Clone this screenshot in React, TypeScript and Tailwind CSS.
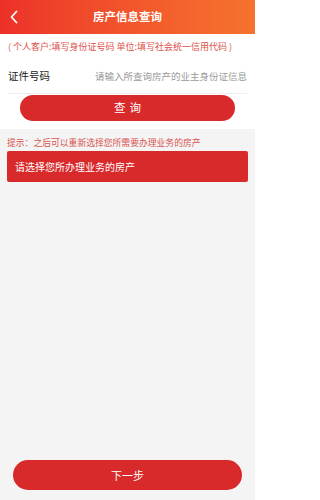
import React from "react";

export default function App() {
  const font = { fontFamily: '"Noto Sans CJK SC", "Noto Sans", sans-serif' };
  return (
    <div style={font} className="w-[255px] h-[500px] flex flex-col bg-[#f4f4f4]">
      <div className="h-[34px] shrink-0 relative flex items-center justify-center bg-gradient-to-r from-[#ec3029] to-[#f6722e]">
        <svg className="absolute left-[9px] top-[10px]" width="10" height="14" viewBox="0 0 10 14">
          <path d="M7.5 1.5 L2.5 7 L7.5 12.5" stroke="#fff" strokeWidth="1.8" fill="none" strokeLinecap="round" strokeLinejoin="round" />
        </svg>
        <span className="text-white text-[11.5px] font-bold leading-none">房产信息查询</span>
      </div>
      <div className="bg-white flex flex-col">
        <div className="h-[24px] flex items-center px-[8px] text-[9px] text-[#e0504a] leading-none">
          ( 个人客户:填写身份证号码 单位:填写社会统一信用代码 )
        </div>
        <div className="h-[36px] mx-[8px] pt-[2px] flex items-center justify-between border-b border-[#eeeeee]">
          <span className="text-[10.5px] text-[#222] leading-none">证件号码</span>
          <span className="text-[9.5px] text-[#999] leading-none">请输入所查询房产的业主身份证信息</span>
        </div>
        <div className="px-[20px] pt-[1px] pb-[8px]">
          <div className="h-[26px] rounded-full bg-[#d8292b] flex items-center justify-center text-white text-[11.5px] tracking-[4px] leading-none">
            <span className="pl-[4px]">查询</span>
          </div>
        </div>
      </div>
      <div className="px-[7px] pt-[7px] text-[8.8px] text-[#d9534f] leading-none h-[22px] flex items-center">
        提示：之后可以重新选择您所需要办理业务的房产
      </div>
      <div className="mx-[7px] h-[31px] bg-[#d8292b] rounded-[2px] flex items-center px-[8px] text-white text-[10px] leading-none">
        请选择您所办理业务的房产
      </div>
      <div className="flex-1" />
      <div className="px-[13px] pb-[10px]">
        <div className="h-[30px] rounded-full bg-[#d8292b] flex items-center justify-center text-white text-[11px] leading-none">
          下一步
        </div>
      </div>
    </div>
  );
}
